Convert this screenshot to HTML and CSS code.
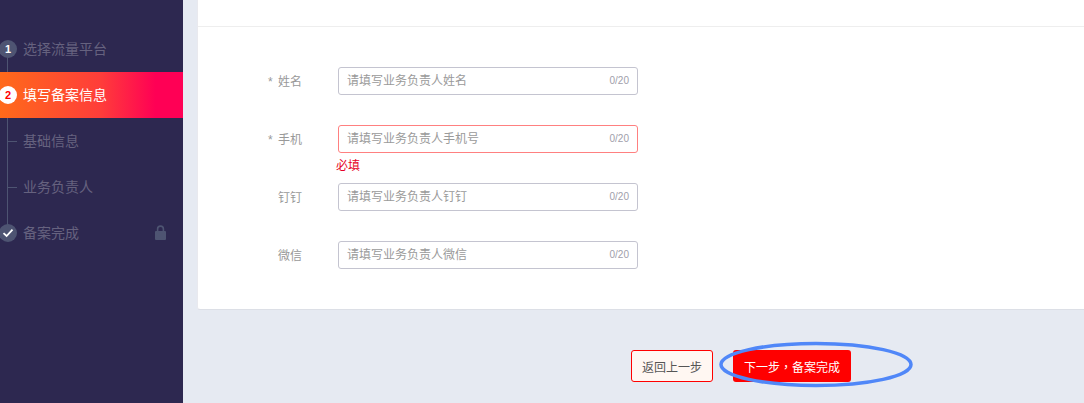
FILE: index.html
```html
<!DOCTYPE html>
<html lang="en">

<head>
    <meta charset="UTF-8">
    <meta name="viewport" content="width=device-width, initial-scale=1.0">
    <title>填写备案信息</title>
    <link rel="stylesheet" href="styles.css">
</head>

<body>
    <div class="container">
        <div class="side-panel">
            <ul class="steps">
                <li class="step">
                    <span class="step-node">1</span>
                    <span class="step-label">选择流量平台</span>
                </li>
                <li class="step active">
                    <span class="step-node">2</span>
                    <span class="step-label">填写备案信息</span>
                </li>
                <li class="step sub">
                    <span class="step-tick"></span>
                    <span class="step-label">基础信息</span>
                </li>
                <li class="step sub">
                    <span class="step-tick"></span>
                    <span class="step-label">业务负责人</span>
                </li>
                <li class="step">
                    <span class="step-node">
                        <svg width="12" height="10" viewBox="0 0 12 10">
                            <path d="M1.5 5.2 L4.6 8 L10.5 1.6" fill="none" stroke="#fff" stroke-width="1.8" />
                        </svg>
                    </span>
                    <span class="step-label">备案完成</span>
                    <svg class="lock" width="11" height="15" viewBox="0 0 11 15">
                        <path d="M2.6 6.5 V4 a2.9 2.9 0 0 1 5.8 0 V6.5" fill="none" stroke="#4e5472" stroke-width="1.6" />
                        <rect x="0" y="6" width="11" height="9" rx="1" fill="#4e5472" />
                    </svg>
                </li>
            </ul>
        </div>

        <div class="main-content">
            <div class="card">
                <div class="card-head"></div>
                <div class="form">
                    <div class="form-row">
                        <label><span class="star">*</span> 姓名</label>
                        <div class="field">
                            <input type="text" placeholder="请填写业务负责人姓名">
                            <span class="count">0/20</span>
                        </div>
                    </div>
                    <div class="form-row">
                        <label><span class="star">*</span> 手机</label>
                        <div class="field error">
                            <input type="text" placeholder="请填写业务负责人手机号">
                            <span class="count">0/20</span>
                            <div class="error-text">必填</div>
                        </div>
                    </div>
                    <div class="form-row">
                        <label>钉钉</label>
                        <div class="field">
                            <input type="text" placeholder="请填写业务负责人钉钉">
                            <span class="count">0/20</span>
                        </div>
                    </div>
                    <div class="form-row">
                        <label>微信</label>
                        <div class="field">
                            <input type="text" placeholder="请填写业务负责人微信">
                            <span class="count">0/20</span>
                        </div>
                    </div>
                </div>
            </div>

            <div class="actions">
                <button class="btn-back">返回上一步</button>
                <button class="btn-next">下一步<span class="comma">，</span>备案完成</button>
                <!-- hand drawn marker round the button -->
                <svg class="marker" width="200" height="50" viewBox="0 0 200 50">
                    <ellipse cx="100" cy="25.5" rx="95" ry="21" fill="none" stroke="#5087f8" stroke-width="3.5" />
                </svg>
            </div>
        </div>
    </div>
</body>

</html>
```

FILE: styles.css
```css
body {
    font-family: "Liberation Sans", "Noto Sans CJK SC", sans-serif;
    background-color: #e6eaf2;
    color: #333;
    margin: 0;
    height: 403px;
    overflow: hidden;
}

.container {
    display: flex;
    height: 100%;
}

.side-panel {
    width: 183px;
    flex-shrink: 0;
    background-color: #2d2850;
    padding-top: 26px;
    box-sizing: border-box;
}

.steps {
    list-style-type: none;
    margin: 0;
    padding: 0;
    position: relative;
}

.steps::before {
    content: "";
    position: absolute;
    left: 7px;
    top: 23px;
    height: 184px;
    width: 1px;
    background-color: #4e5472;
}

.step {
    display: flex;
    align-items: center;
    height: 46px;
    font-size: 14px;
    color: #66627f;
    position: relative;
}

.step.active {
    background: linear-gradient(90deg, #ff6a1a 0%, #ff3d3a 55%, #ff0055 85%);
    color: #fff;
}

.step-label {
    margin-top: -2px;
}

.step-node {
    width: 18px;
    height: 18px;
    margin-left: -1px;
    margin-right: 6px;
    border-radius: 50%;
    background-color: #4e5472;
    color: #fff;
    font-size: 11px;
    font-weight: bold;
    display: flex;
    align-items: center;
    justify-content: center;
    position: relative;
}

.active .step-node {
    background-color: #fff;
    color: #f00;
}

.step-tick {
    width: 9px;
    height: 1px;
    margin-left: 8px;
    margin-right: 6px;
    background-color: #4e5472;
}

.lock {
    margin-left: auto;
    margin-right: 17px;
    margin-top: -1px;
}

.main-content {
    flex: 1;
    min-width: 0;
    padding-left: 14px;
}

.card {
    height: 310px;
    box-sizing: border-box;
    background-color: #fff;
    border-left: 1px solid #e9e9ee;
    border-bottom: 1px solid #dcdfe6;
    border-radius: 0 0 0 3px;
}

.card-head {
    height: 26px;
    border-bottom: 1px solid #eee;
}

.form {
    padding-top: 40px;
}

.form-row {
    display: flex;
    align-items: center;
    margin-bottom: 30px;
}

.form-row label {
    width: 104px;
    margin-right: 36px;
    margin-top: -2px;
    text-align: right;
    font-size: 12px;
    color: #999;
}

.star {
    color: #999;
    margin-right: 2px;
}

.field {
    position: relative;
    width: 300px;
    height: 28px;
}

.field input {
    width: 100%;
    height: 100%;
    box-sizing: border-box;
    padding: 0 40px 0 8px;
    border: 1px solid #c4c4d0;
    border-radius: 3px;
    font-family: inherit;
    font-size: 12px;
    outline: none;
}

.field input::placeholder {
    color: #9a9a9a;
}

.field.error input {
    border-color: #ff8080;
}

.count {
    position: absolute;
    right: 9px;
    top: 8px;
    font-size: 10px;
    color: #a0a0aa;
}

.error-text {
    position: absolute;
    left: -2px;
    top: 31px;
    font-size: 12px;
    color: #e60026;
}

.actions {
    display: flex;
    position: relative;
    gap: 20px;
    margin-top: 40px;
    padding-left: 434px;
}

.actions button {
    height: 32px;
    box-sizing: border-box;
    border-radius: 3px;
    font-family: inherit;
    font-size: 12px;
}

.btn-back {
    width: 82px;
    padding: 0;
    background-color: #fff7f2;
    border: 1px solid #f00;
    color: #555;
}

.btn-next {
    width: 118px;
    padding: 0;
    background-color: #f00;
    border: none;
    color: #fff;
}

.comma {
    font-family: "Noto Sans CJK TC", sans-serif;
}

.marker {
    position: absolute;
    left: 519px;
    top: -11px;
}
```
